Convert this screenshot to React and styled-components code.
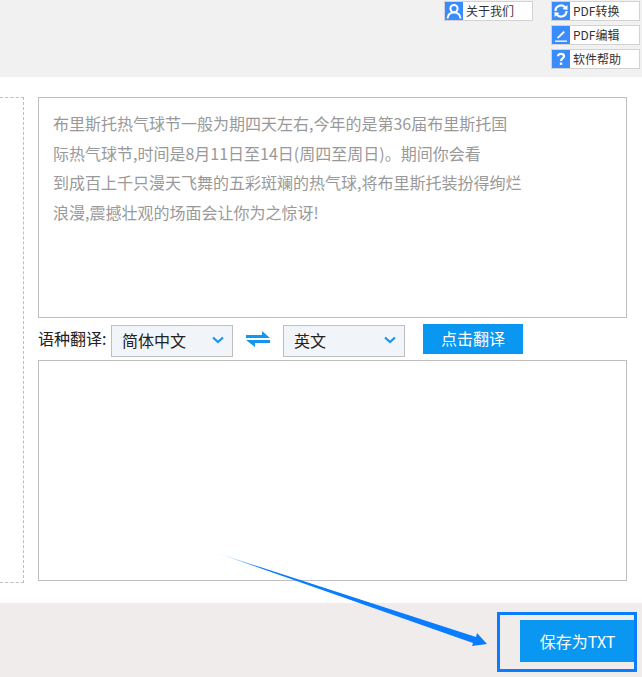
import React from "react";
import styled, { createGlobalStyle } from "styled-components";

const Global = createGlobalStyle`
  html, body { margin: 0; padding: 0; background: #fff; }
  body { font-family: "Noto Sans CJK SC", "Open Sans", sans-serif; }
`;

const Page = styled.div`
  position: relative;
  width: 642px;
  height: 677px;
  overflow: hidden;
  display: flex;
  flex-direction: column;
`;

const Header = styled.header`
  height: 77px;
  background: #f1f1f1;
  display: flex;
  justify-content: flex-end;
  align-items: flex-start;
  gap: 18px;
  padding: 1px 2px 0 0;
  box-sizing: border-box;
`;

const ToolColumn = styled.div`
  display: flex;
  flex-direction: column;
  gap: 4px;
`;

const ToolButton = styled.div`
  width: 89px;
  height: 20px;
  box-sizing: border-box;
  border: 1px solid #d2d2d2;
  background: #fff;
  display: flex;
  align-items: center;
  font-size: 12px;
  color: #333;
  line-height: 18px;
  white-space: nowrap;
`;

const ToolIcon = styled.span`
  width: 18px;
  height: 18px;
  background: #3a8bfb;
  display: flex;
  align-items: center;
  justify-content: center;
  margin-right: 3px;
  flex: none;
`;

const Main = styled.main`
  flex: 1;
  background: #fff;
  display: flex;
  align-items: flex-start;
  padding-top: 20px;
  gap: 14px;
`;

const DashedPanel = styled.div`
  width: 24px;
  height: 486px;
  box-sizing: border-box;
  border-top: 1px dashed #bdbdbd;
  border-right: 1px dashed #bdbdbd;
  border-bottom: 1px dashed #bdbdbd;
  flex: none;
`;

const Workspace = styled.div`
  width: 589px;
  display: flex;
  flex-direction: column;
`;

const TextBox = styled.div`
  height: 221px;
  box-sizing: border-box;
  border: 1px solid #bfbfbf;
  background: #fff;
  padding: 11px 14px;
  font-size: 16px;
  line-height: 29.6px;
  color: #999;
  white-space: nowrap;
`;

const TranslateRow = styled.div`
  height: 42px;
  display: flex;
  align-items: flex-start;
  padding-top: 6px;
  box-sizing: border-box;
`;

const LangLabel = styled.span`
  font-size: 16px;
  line-height: 29px;
  color: #222;
  width: 73px;
  flex: none;
  white-space: nowrap;
`;

const LangSelect = styled.div`
  width: 122px;
  height: 32px;
  margin-top: 1px;
  box-sizing: border-box;
  border: 1px solid #bfbfbf;
  background: #f1f5f9;
  display: flex;
  align-items: center;
  justify-content: space-between;
  padding: 0 8px 2px 10px;
  font-size: 16px;
  color: #222;
`;

const SwapIcon = styled.svg`
  width: 24px;
  height: 16px;
  margin: 7px 13px 0 13px;
  flex: none;
`;

const TranslateButton = styled.div`
  width: 100px;
  height: 30px;
  margin-left: 18px;
  background: #0a97f2;
  color: #fff;
  font-size: 16px;
  line-height: 28px;
  text-align: center;
`;

const Footer = styled.footer`
  height: 74px;
  background: #f0ecec;
  display: flex;
  justify-content: flex-end;
  align-items: flex-start;
  padding: 17px 7px 0 0;
  box-sizing: border-box;
`;

const SaveButton = styled.div`
  width: 115px;
  height: 42px;
  background: #0a97f2;
  color: #fff;
  font-size: 16px;
  line-height: 42px;
  text-align: center;
`;

const Annotation = styled.svg`
  position: absolute;
  left: 0;
  top: 0;
  pointer-events: none;
`;

const Chevron = () => (
  <svg width="12" height="8" viewBox="0 0 12 8">
    <path d="M1 1.5 L6 6 L11 1.5" fill="none" stroke="#1a94ee" strokeWidth="2.2" />
  </svg>
);

const lines = [
  "布里斯托热气球节一般为期四天左右,今年的是第36届布里斯托国",
  "际热气球节,时间是8月11日至14日(周四至周日)。期间你会看",
  "到成百上千只漫天飞舞的五彩斑斓的热气球,将布里斯托装扮得绚烂",
  "浪漫,震撼壮观的场面会让你为之惊讶!",
];

export default function App() {
  return (
    <Page>
      <Global />
      <Header>
        <ToolColumn>
          <ToolButton>
            <ToolIcon>
              <svg width="16" height="16" viewBox="0 0 16 16" fill="none" stroke="#fff" strokeWidth="2">
                <circle cx="8" cy="5.5" r="3.6" />
                <path d="M1.5 15.5 C2 11 5 9.5 8 9.5 C11 9.5 14 11 14.5 15.5" />
              </svg>
            </ToolIcon>
            关于我们
          </ToolButton>
        </ToolColumn>
        <ToolColumn>
          <ToolButton>
            <ToolIcon>
              <svg width="16" height="16" viewBox="0 0 16 16" fill="none" stroke="#fff" strokeWidth="2.2">
                <path d="M2.5 8 A5.5 5.5 0 0 1 12.5 4.8" />
                <path d="M13.5 8 A5.5 5.5 0 0 1 3.5 11.2" />
                <path d="M14.5 2 L14.5 7 L9.5 6 Z" fill="#fff" stroke="none" />
                <path d="M1.5 14 L1.5 9 L6.5 10 Z" fill="#fff" stroke="none" />
              </svg>
            </ToolIcon>
            PDF转换
          </ToolButton>
          <ToolButton>
            <ToolIcon>
              <svg width="16" height="16" viewBox="0 0 16 16" fill="#fff">
                <path d="M4.5 10 L10.5 4 L12 5.2 L6 11 L4 11.5 Z" />
                <rect x="2" y="13.5" width="12" height="1.3" />
              </svg>
            </ToolIcon>
            PDF编辑
          </ToolButton>
          <ToolButton>
            <ToolIcon>
              <svg width="16" height="16" viewBox="0 0 16 16" fill="none" stroke="#fff" strokeWidth="2.2">
                <path d="M5 5.2 C5 2.2 11 2.2 11 5.2 C11 7.4 8 7.4 8 10" />
                <rect x="6.8" y="11.5" width="2.4" height="2.4" fill="#fff" stroke="none" />
              </svg>
            </ToolIcon>
            软件帮助
          </ToolButton>
        </ToolColumn>
      </Header>
      <Main>
        <DashedPanel />
        <Workspace>
          <TextBox>
            {lines.map((l) => (
              <div key={l}>{l}</div>
            ))}
          </TextBox>
          <TranslateRow>
            <LangLabel>语种翻译:</LangLabel>
            <LangSelect>
              简体中文
              <Chevron />
            </LangSelect>
            <SwapIcon viewBox="0 0 24 16" fill="#1296f0">
              <path d="M0 4 H16 V0 L24 7 H0 Z" />
              <path d="M24 9 H0 L9 16 V12 H24 Z" />
            </SwapIcon>
            <LangSelect>
              英文
              <Chevron />
            </LangSelect>
            <TranslateButton>点击翻译</TranslateButton>
          </TranslateRow>
          <TextBox />
        </Workspace>
      </Main>
      <Footer>
        <SaveButton>保存为TXT</SaveButton>
      </Footer>
      <Annotation width="642" height="677" viewBox="0 0 642 677">
        <defs>
          <linearGradient id="fade" gradientUnits="userSpaceOnUse" x1="217" y1="553" x2="262" y2="568">
            <stop offset="0" stopColor="#0a7cff" stopOpacity="0.15" />
            <stop offset="1" stopColor="#0a7cff" />
          </linearGradient>
        </defs>
        <path d="M217 553 L476 637 L477 633 L487 644 L472 646 L473 643 Z" fill="url(#fade)" />
        <rect x="498.5" y="613.5" width="137" height="57" fill="none" stroke="#0a7cff" strokeWidth="3" />
      </Annotation>
    </Page>
  );
}
